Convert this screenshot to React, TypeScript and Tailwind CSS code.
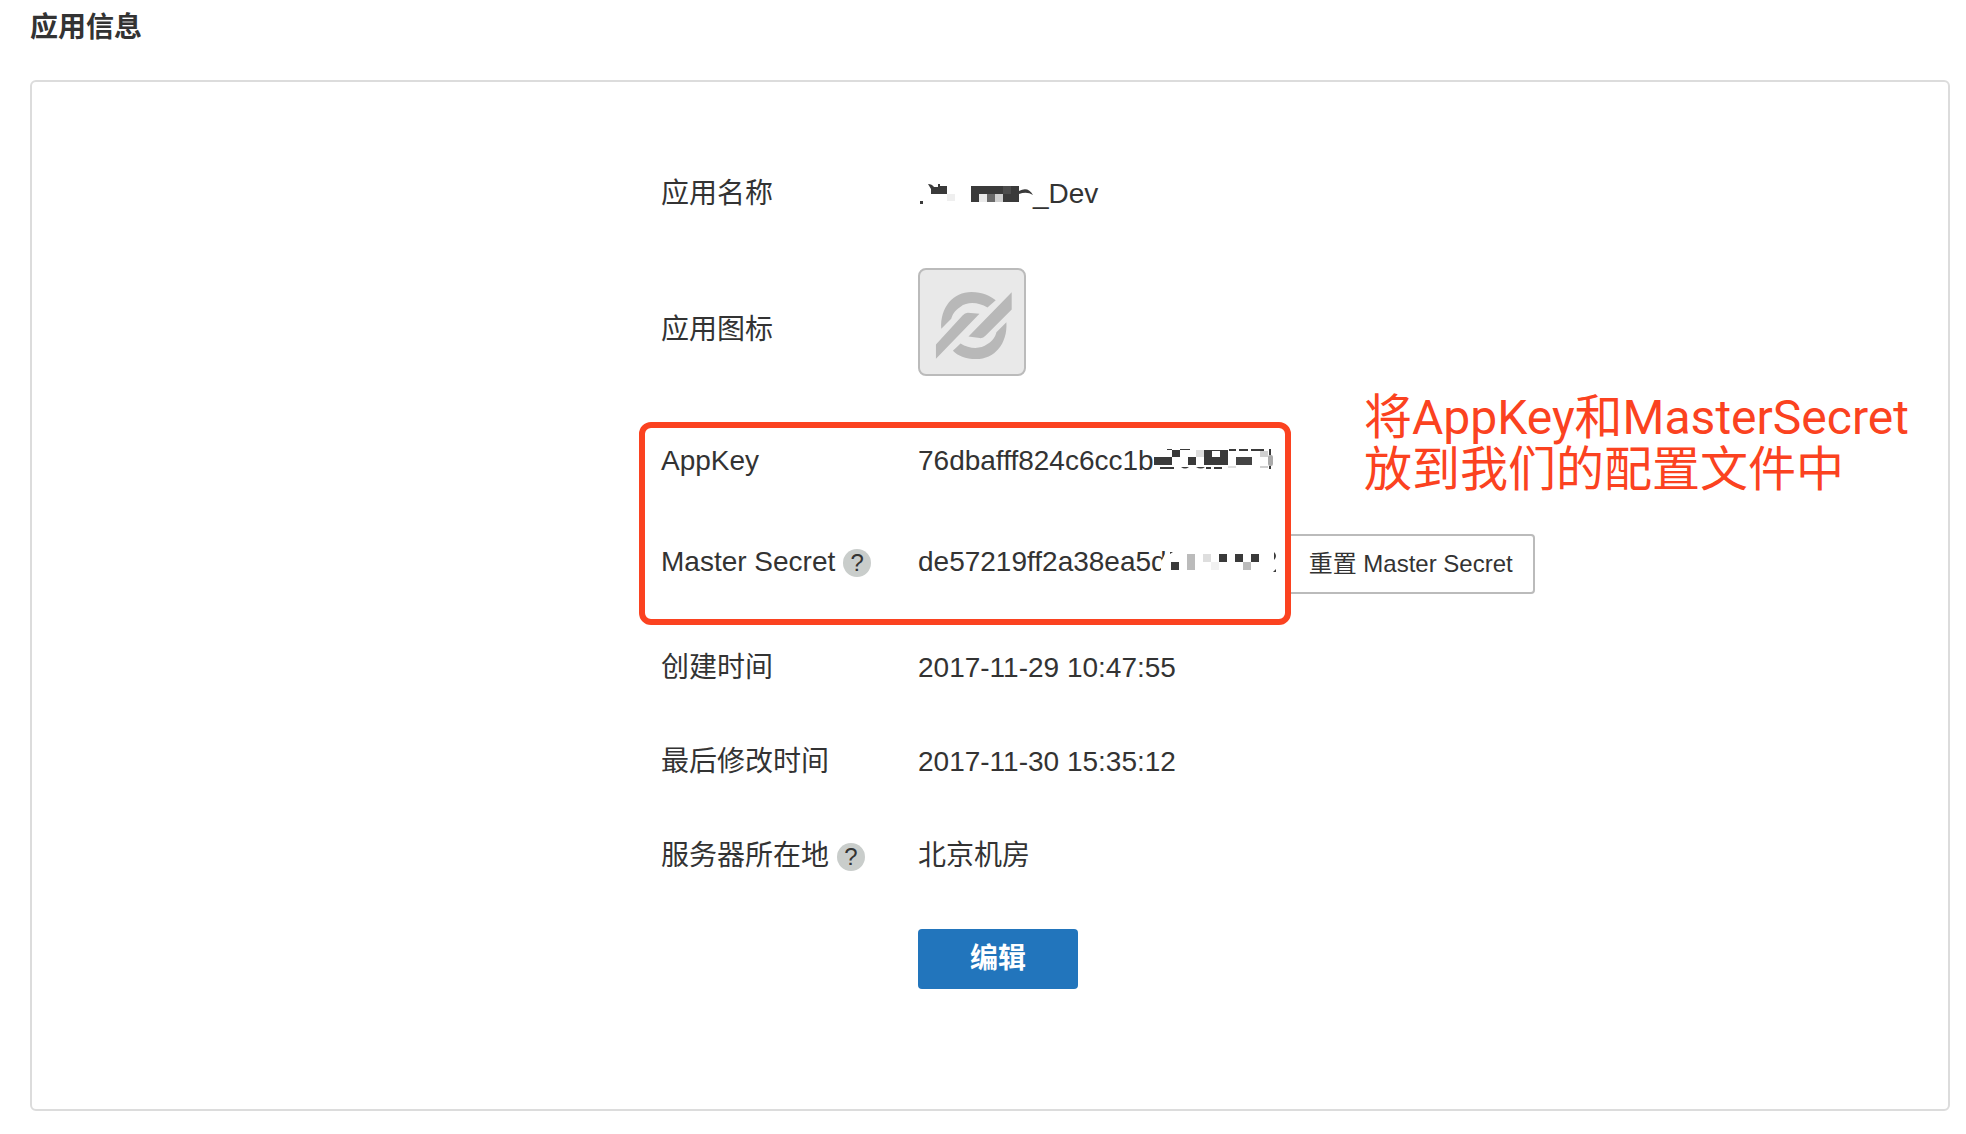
import React from 'react';

type RowProps = {
  label: string;
  hint?: string;
  className?: string;
  labelClassName?: string;
  children: React.ReactNode;
};

function Row({ label, hint, className = 'h-[94px]', labelClassName = '', children }: RowProps) {
  return (
    <div className={`flex items-center whitespace-nowrap ${className}`}>
      <dt className={`flex w-[257px] shrink-0 items-center ${labelClassName}`}>
        {label}
        {hint && (
          <button
            type="button"
            aria-label={hint}
            className="ml-2 mt-0.5 flex size-7 items-center justify-center rounded-full bg-[#c9cdcb] text-2xl leading-7"
          >
            ?
          </button>
        )}
      </dt>
      <dd className="flex items-center">{children}</dd>
    </div>
  );
}

function AppLogo() {
  return (
    <svg viewBox="60 58 313 313" className="size-full" fill="#b8b8b8" aria-hidden="true">
      <path d="M124 235C120 170 160 124 215 124C248 124 272 136 288 149L263 171C236 155 204 152 181 169C163 181 157 193 154 205Z" />
      <path d="M108 282L188 195Q195 187 204 187L239 190L108 325Z" />
      <path d="M336 125V177L257 256Q250 264 240 263L206 258Z" />
      <path d="M320 215C324 280 284 326 229 326C196 326 174 316 159 301L182 279C208 295 240 298 263 281C281 269 287 257 290 245Z" />
    </svg>
  );
}

// Mosaic over the first part of the application name
function NameMask() {
  return (
    <svg width="115" height="28" viewBox="0 0 115 28" fill="#3a3a3a" aria-hidden="true">
      <rect x="2" y="21" width="3" height="3" />
      <path d="M10 4Q14 4 16 7H20V4H22V6H29V14H13V9Z" />
      <rect x="29" y="14" width="8" height="7" fill="#efefef" />
      <rect x="53" y="6" width="48" height="16" />
      <rect x="61" y="14" width="8" height="8" fill="#eaeaea" />
      <rect x="69" y="14" width="8" height="8" fill="#6a6a6a" />
      <rect x="77" y="14" width="8" height="8" fill="#d0d0d0" />
      <rect x="85" y="6" width="8" height="8" fill="#4c4c4c" />
      <path d="M101 11Q110 6 115 15Q109 11 101 14Z" />
    </svg>
  );
}

function KeyMask() {
  return (
    <svg width="120" height="28" viewBox="-6 0 120 28" fill="#3a3a3a" aria-hidden="true">
      <rect x="-6" y="10" width="18" height="8" />
      <rect x="12" y="3" width="8" height="7" />
      <rect x="7" y="2" width="5" height="1" />
      <rect x="20" y="2" width="10" height="1" />
      <rect x="0" y="20" width="14" height="2" />
      <rect x="28" y="10" width="8" height="8" />
      <path d="M21 20H29Q25 23 21 20Z" />
      <rect x="36" y="3" width="8" height="7" fill="#dedede" />
      <path d="M36 20H45Q41 23 36 20Z" />
      <path d="M44 3H68V18H44ZM52 4V10H60V4Z" fillRule="evenodd" />
      <rect x="46" y="20" width="5" height="2" />
      <rect x="54" y="20" width="8" height="2" />
      <rect x="68" y="19" width="8" height="2" fill="#dedede" />
      <rect x="69" y="2" width="7" height="2" />
      <rect x="79" y="2" width="9" height="2" />
      <rect x="91" y="2" width="13" height="2" />
      <rect x="76" y="10" width="16" height="8" fill="#444" />
      <rect x="100" y="4" width="8" height="6" fill="#d0d0d0" />
      <rect x="100" y="19" width="8" height="2" fill="#d0d0d0" />
      <rect x="108" y="8" width="5" height="11" rx="2" fill="#aaa" />
      <rect x="109" y="2" width="2" height="6" />
      <rect x="109" y="19" width="2" height="3" />
    </svg>
  );
}

function SecretMask() {
  return (
    <svg width="120" height="28" viewBox="0 0 120 28" className="-ml-2" fill="#3a3a3a" aria-hidden="true">
      <path d="M8 2L2 14V28H14V2Z" fill="#fff" />
      <path d="M11 4H14L11 6Z" />
      <rect x="12" y="14" width="8" height="8" />
      <rect x="28" y="6" width="8" height="16" fill="#bbb" />
      <rect x="44" y="6" width="8" height="8" fill="#dedede" />
      <rect x="52" y="14" width="8" height="8" fill="#f2f2f2" />
      <rect x="60" y="6" width="8" height="8" />
      <rect x="76" y="6" width="8" height="8" />
      <rect x="84" y="14" width="8" height="8" fill="#bbb" />
      <rect x="92" y="6" width="8" height="8" />
      <path d="M115 4Q119 8 115 12Z" />
      <path d="M114 24L117 21V24Z" />
    </svg>
  );
}

export default function App() {
  return (
    <main className="min-h-screen bg-white pl-[30px] pr-4 font-['Liberation_Sans','Noto_Sans_CJK_SC',sans-serif] text-[28px] leading-10 text-[#333]">
      <h1 className="h-20 pt-0.5 font-bold leading-[52px]">应用信息</h1>

      <section className="rounded-md border-2 border-[#dcdcdc] pb-[120px] pt-[65px]">
        <div className="relative mx-auto w-[658px]">
          <dl>
            <Row label="应用名称">
              <NameMask />
              _Dev
            </Row>
            <Row label="应用图标" className="h-[162px]" labelClassName="pt-4">
              <div className="size-[108px] rounded-lg border-2 border-[#bbb] bg-[#e9e9e9]">
                <AppLogo />
              </div>
            </Row>
            <Row label="AppKey" className="h-[116px]">
              76dbafff824c6cc1b
              <KeyMask />
            </Row>
            <Row label="Master Secret" hint="Master Secret 说明" className="mb-4 h-[86px]">
              de57219ff2a38ea5d
              <SecretMask />
              <button
                type="button"
                className="ml-2 mt-1 h-[60px] rounded border-2 border-[#bbb] bg-white px-5 text-2xl"
              >
                重置 Master Secret
              </button>
            </Row>
            <Row label="创建时间">2017-11-29 10:47:55</Row>
            <Row label="最后修改时间">2017-11-30 15:35:12</Row>
            <Row label="服务器所在地" hint="服务器所在地说明">
              北京机房
            </Row>
          </dl>

          <button
            type="button"
            className="ml-[257px] mt-[26px] block h-[60px] w-40 rounded bg-[#2275bc] font-bold text-white"
          >
            编辑
          </button>

          {/* highlight frame and note drawn over the key rows */}
          <div className="pointer-events-none absolute -left-[22px] top-[275px] h-[203px] w-[652px] rounded-xl border-6 border-[#fb4220]" />
          <p className="absolute left-[703px] top-[245px] whitespace-nowrap font-[Roboto,'Noto_Sans_CJK_SC',sans-serif] text-5xl leading-[52px] text-[#fb4220]">
            将AppKey和MasterSecret
            <br />
            放到我们的配置文件中
          </p>
        </div>
      </section>
    </main>
  );
}
